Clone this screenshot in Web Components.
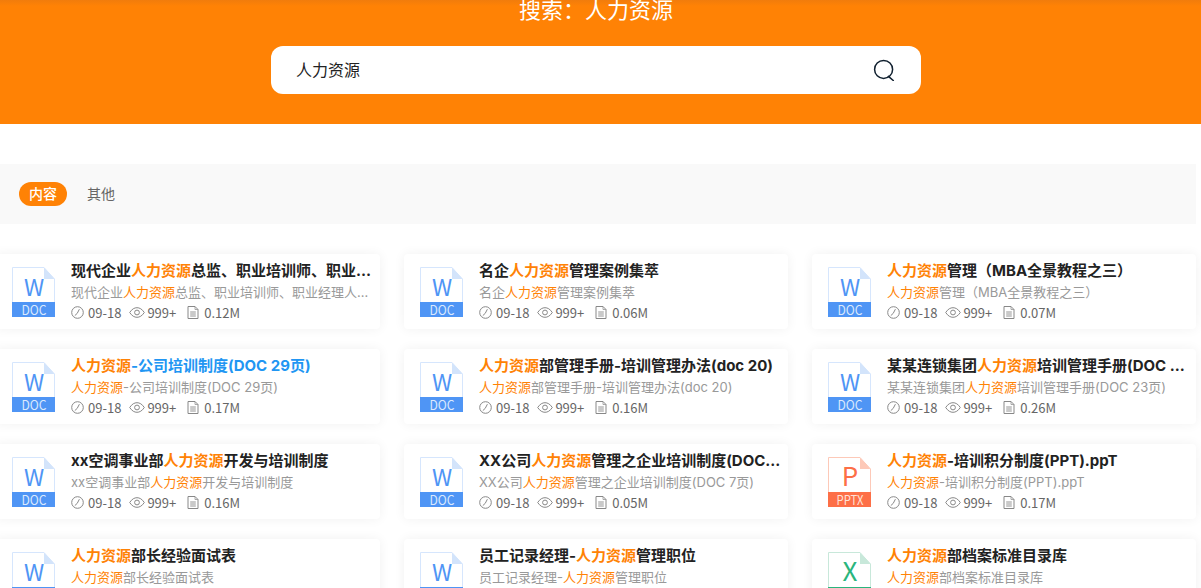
<!DOCTYPE html>
<html lang="zh">
<head>
<meta charset="utf-8">
<title>搜索</title>
<style>
    html, body { margin: 0; padding: 0; background: #fff; overflow: hidden; height: 588px; }
    body { font-family: Inter, "Noto Sans CJK SC", sans-serif; }
</style>
</head>
<body>
<search-hero query="人力资源">搜索：人力资源</search-hero>
<filter-bar>
    <filter-tab active>内容</filter-tab>
    <filter-tab>其他</filter-tab>
</filter-bar>
<doc-grid>
    <doc-card type="doc" heading="现代企业人力资源总监、职业培训师、职业经理人培训教程" sub="现代企业人力资源总监、职业培训师、职业经理人培训教程资料" size="0.12M"></doc-card>
    <doc-card type="doc" heading="名企人力资源管理案例集萃" sub="名企人力资源管理案例集萃" size="0.06M"></doc-card>
    <doc-card type="doc" heading="人力资源管理（MBA全景教程之三）" sub="人力资源管理（MBA全景教程之三）" size="0.07M"></doc-card>
    <doc-card type="doc" hover heading="人力资源-公司培训制度(DOC 29页)" sub="人力资源-公司培训制度(DOC 29页)" size="0.17M"></doc-card>
    <doc-card type="doc" heading="人力资源部管理手册-培训管理办法(doc 20)" sub="人力资源部管理手册-培训管理办法(doc 20)" size="0.16M"></doc-card>
    <doc-card type="doc" heading="某某连锁集团人力资源培训管理手册(DOC 23页)" sub="某某连锁集团人力资源培训管理手册(DOC 23页)" size="0.26M"></doc-card>
    <doc-card type="doc" heading="xx空调事业部人力资源开发与培训制度" sub="xx空调事业部人力资源开发与培训制度" size="0.16M"></doc-card>
    <doc-card type="doc" heading="XX公司人力资源管理之企业培训制度(DOC 7页)" sub="XX公司人力资源管理之企业培训制度(DOC 7页)" size="0.05M"></doc-card>
    <doc-card type="ppt" heading="人力资源-培训积分制度(PPT).ppT" sub="人力资源-培训积分制度(PPT).ppT" size="0.17M"></doc-card>
    <doc-card type="doc" heading="人力资源部长经验面试表" sub="人力资源部长经验面试表" size="0.03M"></doc-card>
    <doc-card type="doc" heading="员工记录经理-人力资源管理职位" sub="员工记录经理-人力资源管理职位" size="0.04M"></doc-card>
    <doc-card type="xls" heading="人力资源部档案标准目录库" sub="人力资源部档案标准目录库" size="0.02M"></doc-card>
</doc-grid>

<script>
class SearchHero extends HTMLElement {
    constructor() {
        super()
        this.attachShadow({ mode: "open" })
    }

    connectedCallback() {
        this.shadowRoot.innerHTML = /*html*/ `
            <style>
                :host {
                    display: block;
                    height: 124px;
                    background: #ff8205;
                    box-sizing: border-box;
                    position: relative;
                    overflow: hidden;
                }
                :host::before {
                    content: "";
                    position: absolute;
                    left: 0;
                    right: 0;
                    top: 0;
                    height: 6px;
                    background: linear-gradient(#f17c0c, #ff8205);
                }
                h1 {
                    margin: -5px 0 0;
                    height: 51px;
                    line-height: 30px;
                    font-size: 22px;
                    font-weight: 400;
                    color: #fff;
                    text-align: center;
                    width: 1192px;
                    position: relative;
                }
                #box {
                    width: 650px;
                    height: 48px;
                    margin-left: 271px;
                    background: #fff;
                    border-radius: 12px;
                    box-sizing: border-box;
                    padding: 0 26px 0 25px;
                    display: flex;
                    align-items: center;
                    justify-content: space-between;
                    font-size: 16px;
                    color: #222;
                }
                #box span { padding-bottom: 2px; }
                svg { display: block; }
            </style>
            <h1><slot></slot></h1>
            <div id="box">
                <span>${this.getAttribute("query")}</span>
                <svg width="22" height="22" viewBox="0 0 22 22" fill="none" stroke="#10202f" stroke-width="1.5">
                    <circle cx="10.6" cy="10.4" r="9"/>
                    <path d="M15.2 17.6 L20.6 21" stroke-linecap="round" transform="rotate(8 17 19)"/>
                </svg>
            </div>
        `
    }
}

class FilterBar extends HTMLElement {
    constructor() {
        super()
        this.attachShadow({ mode: "open" })
        this.shadowRoot.innerHTML = /*html*/ `
            <style>
                :host {
                    display: flex;
                    align-items: center;
                    gap: 20px;
                    width: 1196px;
                    height: 60px;
                    margin-top: 40px;
                    padding-left: 19px;
                    box-sizing: border-box;
                    background: #f9f9f9;
                }
            </style>
            <slot></slot>
        `
    }
}

class FilterTab extends HTMLElement {
    constructor() {
        super()
        this.attachShadow({ mode: "open" })
        this.shadowRoot.innerHTML = /*html*/ `
            <style>
                :host {
                    display: block;
                    font-size: 14px;
                    line-height: 24px;
                    color: #666;
                }
                :host([active]) {
                    width: 48px;
                    text-align: center;
                    border-radius: 12px;
                    background: #ff8205;
                    color: #fff;
                    font-weight: 500;
                }
            </style>
            <slot></slot>
        `
    }
}

class DocGrid extends HTMLElement {
    constructor() {
        super()
        this.attachShadow({ mode: "open" })
        this.shadowRoot.innerHTML = /*html*/ `
            <style>
                :host {
                    display: grid;
                    grid-template-columns: repeat(3, 384px);
                    column-gap: 24px;
                    row-gap: 20px;
                    margin: 30px 0 0 -4px;
                }
            </style>
            <slot></slot>
        `
    }
}

const FILE_KINDS = {
    doc: { color: "#4f95f5", edge: "#d6e6fd", fold: "#d3e4fb", letter: "W", size: 23, label: "DOC", labelWidth: 25, labelColor: "#dbe9fd" },
    ppt: { color: "#fd6f47", edge: "#fdc9b8", fold: "#fdc9b8", letter: "P", size: 26, label: "PPTX", labelWidth: 27, labelColor: "#ffe2d8" },
    xls: { color: "#2ab57d", edge: "#c8e8da", fold: "#c8e8da", letter: "X", size: 26, label: "XLSX", labelWidth: 27, labelColor: "#d8f2e7" }
}

class FileIcon extends HTMLElement {
    constructor() {
        super()
        this.attachShadow({ mode: "open" })
    }

    connectedCallback() {
        const kind = FILE_KINDS[this.getAttribute("type")]
        this.shadowRoot.innerHTML = /*html*/ `
            <style>
                :host { display: block; width: 43px; height: 50px; }
                svg { display: block; }
                text { font-family: "Noto Sans CJK SC", sans-serif; text-anchor: middle; }
            </style>
            <svg width="43" height="50" viewBox="0 0 43 50">
                <path d="M.5 .5H32L42.5 12V49.5H.5Z" fill="#fff" stroke="${kind.edge}"/>
                <path d="M32 .5L42.5 12H32Z" fill="${kind.fold}"/>
                <rect x="0" y="35" width="43" height="15" fill="${kind.color}"/>
                <text x="22" y="28.5" font-size="${kind.size}" fill="${kind.color}">${kind.letter}</text>
                <text x="22" y="47.5" font-size="13" textLength="${kind.labelWidth}" lengthAdjust="spacingAndGlyphs" fill="${kind.labelColor}">${kind.label}</text>
            </svg>
        `
    }
}

class DocCard extends HTMLElement {
    constructor() {
        super()
        this.attachShadow({ mode: "open" })
    }

    mark(text) {
        return text.replace(/人力资源/g, "<em>人力资源</em>")
    }

    connectedCallback() {
        this.shadowRoot.innerHTML = /*html*/ `
            <style>
                :host {
                    display: flex;
                    gap: 16px;
                    height: 75px;
                    padding: 13px 6px 0 16px;
                    box-sizing: border-box;
                    background: #fff;
                    border-radius: 4px;
                    box-shadow: 0 0 12px rgba(0, 0, 0, .06);
                    min-width: 0;
                }
                #text { flex: 1; min-width: 0; }
                em { font-style: normal; color: #ff8205; }
                h3, p {
                    margin: 0;
                    white-space: nowrap;
                    overflow: hidden;
                    text-overflow: ellipsis;
                }
                h3 {
                    font-size: 15px;
                    line-height: 20px;
                    font-weight: 700;
                    color: #222;
                    margin-top: -6px;
                }
                :host([hover]) h3 { color: #2196f3; }
                p {
                    font-size: 13px;
                    line-height: 20px;
                    color: #999;
                    margin-top: 1px;
                    padding-right: 2px;
                }
                #meta {
                    display: flex;
                    align-items: center;
                    height: 20px;
                    margin-top: 0;
                    font-size: 13px;
                    color: #666;
                    font-family: "Noto Sans CJK SC", sans-serif;
                }
                #meta svg { display: block; flex: none; fill: none; stroke: #888; stroke-width: 1; }
                #date { margin: 0 8px 0 4px; }
                #views { margin: 0 11px 0 2px; }
                #size { margin-left: 5px; }
            </style>
            <file-icon type="${this.getAttribute("type")}"></file-icon>
            <div id="text">
                <h3>${this.mark(this.getAttribute("heading"))}</h3>
                <p>${this.mark(this.getAttribute("sub"))}</p>
                <div id="meta">
                    <svg width="13" height="13" viewBox="0 0 13 13">
                        <circle cx="6.5" cy="6.5" r="5.8"/>
                        <path d="M8.4 3.2L6.2 7.4L3.8 9.6"/>
                    </svg>
                    <span id="date">09-18</span>
                    <svg width="16" height="11" viewBox="0 0 16 11">
                        <path d="M.7 5.5C3 2 5.4 .7 8 .7S13 2 15.3 5.5C13 9 10.6 10.3 8 10.3S3 9 .7 5.5Z"/>
                        <circle cx="8" cy="5.5" r="2.4"/>
                    </svg>
                    <span id="views">999+</span>
                    <svg width="12" height="13" viewBox="0 0 12 13">
                        <path d="M1 .5H8L11 3.5V12.5H1Z"/>
                        <path d="M8 .5V3.5H11" stroke-width=".7"/>
                        <path d="M3.2 6H8.8M3.2 8H8.8M3.2 10H8.8" stroke-width=".9"/>
                    </svg>
                    <span id="size">${this.getAttribute("size")}</span>
                </div>
            </div>
        `
    }
}

customElements.define("search-hero", SearchHero)
customElements.define("filter-bar", FilterBar)
customElements.define("filter-tab", FilterTab)
customElements.define("doc-grid", DocGrid)
customElements.define("file-icon", FileIcon)
customElements.define("doc-card", DocCard)
</script>
</body>
</html>
